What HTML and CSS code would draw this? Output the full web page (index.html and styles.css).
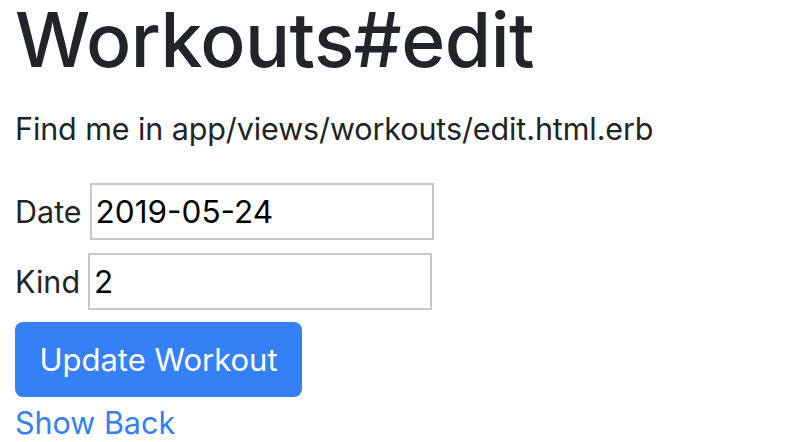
FILE: index.html
```html
<!DOCTYPE html>
<html>
<head>
<meta charset="utf-8">
<link rel="stylesheet" href="styles.css">
</head>
<body>
<h1 class="title">Workouts#edit</h1>
<p class="lead">Find me in app/views/workouts/edit.html.erb</p>
<form class="form">
  <div class="field"><label class="label">Date</label><input class="input input-date" type="text" value="2019-05-24"></div>
  <div class="field"><label class="label">Kind</label><input class="input input-kind" type="text" value="2"></div>
  <button class="btn" type="button">Update Workout</button>
</form>
<div class="links"><a class="link" href="#">Show</a> <a class="link" href="#">Back</a></div>
</body>
</html>
```
FILE: styles.css
```css
html, body { margin: 0; padding: 0; background: #fff; }
body {
  padding: 0 15px;
  font-family: Inter, "Noto Sans", sans-serif;
  font-size: 32px;
  line-height: 48px;
  color: #212529;
}
.title {
  margin: 0;
  font-size: 75px;
  font-weight: 500;
  line-height: 80px;
  letter-spacing: -0.5px;
}
.lead { margin: 25px 0 30px 0; font-size: 30.5px; letter-spacing: -0.1px; }
.form { display: flex; flex-direction: column; align-items: flex-start; gap: 13px; }
.field { display: flex; align-items: center; height: 57px; }
.label { font-size: 30.5px; margin-right: 8px; }
.input {
  box-sizing: border-box;
  height: 57px;
  border: 2px solid #c8c8c8;
  padding: 0 4px;
  font-family: Inter, sans-serif;
  font-size: 31.5px;
  color: #000;
  outline: none;
}
.input-date { width: 344px; }
.input-kind { width: 344px; }
.btn {
  box-sizing: border-box;
  margin-top: -1px;
  height: 75px;
  width: 287px;
  border: none;
  border-radius: 8px;
  background: #3580f4;
  color: #fff;
  font-family: Inter, sans-serif;
  font-size: 31px;
  cursor: pointer;
}
.links { margin-top: 3px; font-size: 30.5px; line-height: 46px; }
.link { color: #3580f4; text-decoration: none; }
```
